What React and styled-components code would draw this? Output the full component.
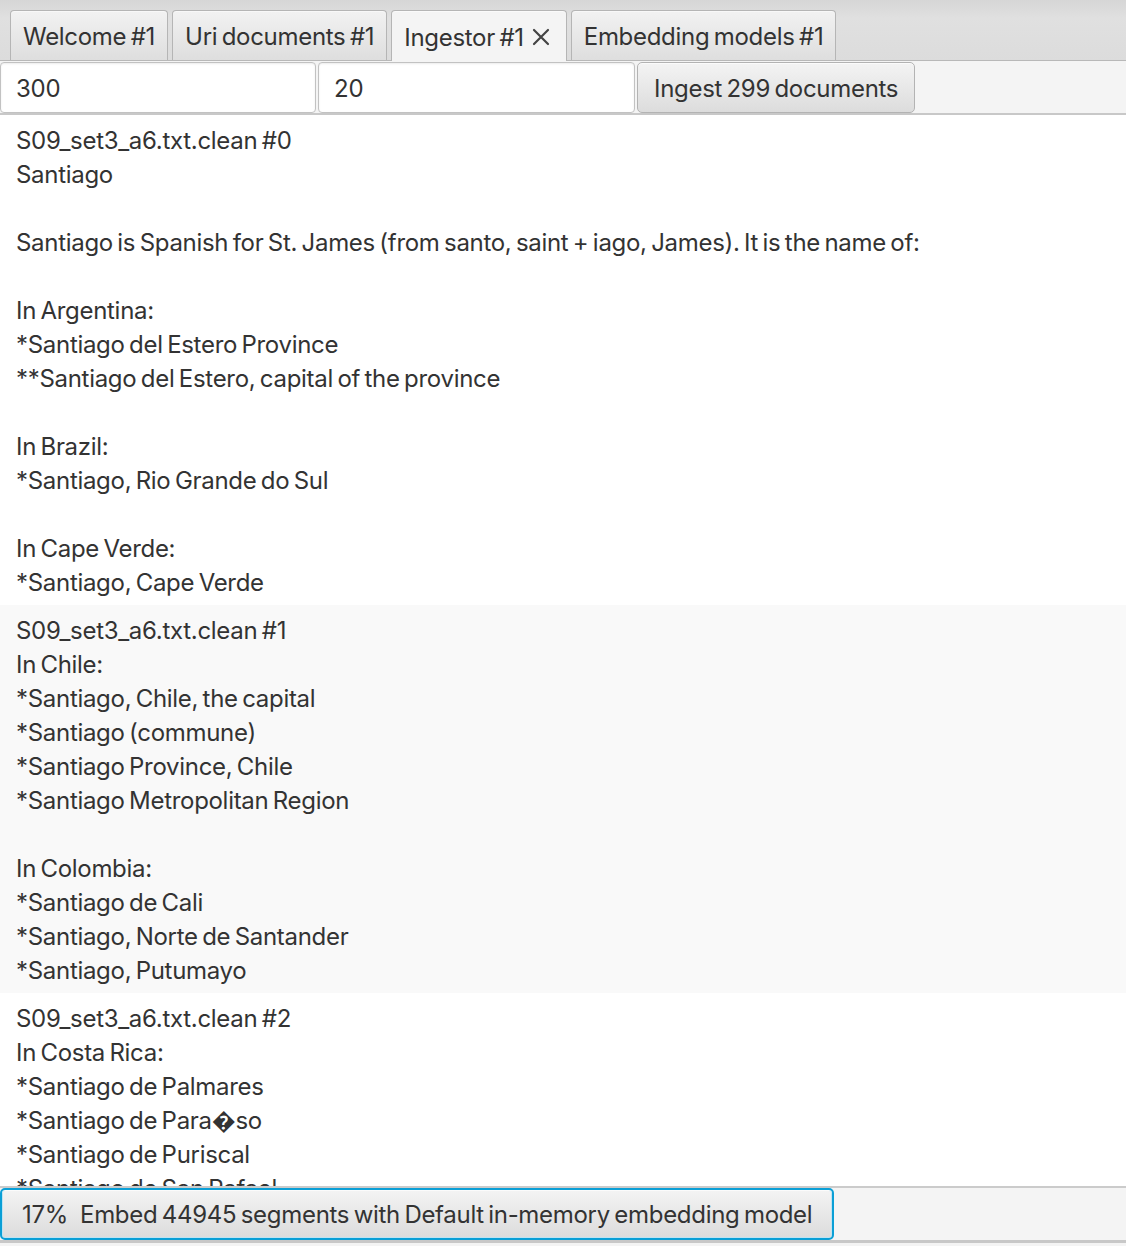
import React from 'react';
import styled, { createGlobalStyle } from 'styled-components';

const GlobalStyle = createGlobalStyle`
	html, body {
		margin: 0;
		padding: 0;
		background: #f4f4f4;
	}
	body {
		font-family: 'Inter', 'Noto Sans', 'DejaVu Sans', sans-serif;
		color: #333333;
		word-spacing: -2px;
	}
`;

const Window = styled.div`
	width: 1126px;
	height: 1246px;
	display: flex;
	flex-direction: column;
	overflow: hidden;
	background: #f4f4f4;
`;

const TabHeader = styled.div`
	height: 61px;
	display: flex;
	align-items: flex-end;
	gap: 4px;
	padding-left: 10px;
	background: linear-gradient(#d6d6d6, #e0e0e0 30%, #dcdcdc);
	border-bottom: 1px solid #b8b8b8;
	box-sizing: border-box;
	flex-shrink: 0;
`;

const Tab = styled.div`
	box-sizing: border-box;
	display: flex;
	align-items: center;
	gap: 8px;
	padding: 0 ${p => (p.selected ? '16px 0 12px' : '12px')};
	padding-top: 2px;
	font-size: 24px;
	letter-spacing: -0.3px;
	color: #333;
	border: 1px solid #b5b5b5;
	border-bottom: none;
	border-radius: 4px 4px 0 0;
	background: ${p => (p.selected ? '#f4f4f4' : 'linear-gradient(#f2f2f2, #dedede)')};
	box-shadow: inset 0 1px 0 ${p => (p.selected ? '#fafafa' : '#f8f8f8')};
	margin-bottom: ${p => (p.selected ? '-1px' : '0')};
	height: ${p => (p.selected ? '51px' : '50px')};
`;

const CloseIcon = () => (
	<svg width="18" height="18" viewBox="0 0 18 18">
		<path d="M2 2 L16 16 M16 2 L2 16" stroke="#444" strokeWidth="2.2" strokeLinecap="round" />
	</svg>
);

const Toolbar = styled.div`
	height: 54px;
	box-sizing: border-box;
	display: flex;
	align-items: center;
	gap: 2px;
	padding: 1px 0;
	background: #f4f4f4;
	border-bottom: 2px solid #c8c8c8;
	flex-shrink: 0;
`;

const Field = styled.div`
	width: ${p => p.width}px;
	height: 51px;
	box-sizing: border-box;
	display: flex;
	align-items: center;
	padding-left: 15px;
	padding-top: 2px;
	font-size: 24px;
	letter-spacing: -0.2px;
	color: #333;
	background: #ffffff;
	border: 1px solid #c2c2c2;
	border-radius: 4px;
	box-shadow: inset 0 1px 2px rgba(0, 0, 0, 0.08);
`;

const Button = styled.div`
	height: ${p => p.height || 51}px;
	box-sizing: border-box;
	display: flex;
	align-items: center;
	padding: ${p => (p.focused ? '0' : '2px')} ${p => p.pad || 16}px 0;
	font-size: 24px;
	letter-spacing: -0.3px;
	color: #333;
	background: linear-gradient(#f4f4f4, #dcdcdc);
	border: ${p => (p.focused ? '2px solid #0a9fd6' : '1px solid #b3b3b3')};
	border-radius: 5px;
	box-shadow: inset 0 1px 0 #fbfbfb${p => (p.focused ? ', inset 0 0 0 1px #bfe3f2' : '')};
	white-space: nowrap;
`;

const Percent = styled.span`
	margin-right: 12px;
`;

const List = styled.div`
	flex: 1;
	overflow: hidden;
	background: #ffffff;
`;

const Cell = styled.div`
	padding: 9px 16px 5px;
	background: ${p => (p.odd ? '#f9f9f9' : '#ffffff')};
	font-size: 24px;
	line-height: 34px;
	letter-spacing: -0.3px;
	color: #333;
	white-space: pre;
`;

const BottomBar = styled.div`
	height: 60px;
	box-sizing: border-box;
	display: flex;
	align-items: flex-start;
	background: #f4f4f4;
	border-top: 2px solid #cbcbcb;
	flex-shrink: 0;
	position: relative;
`;

const BottomRule = styled.div`
	position: absolute;
	left: 0;
	right: 0;
	bottom: 3px;
	height: 3px;
	background: #c8c8c8;
`;

const cells = [
	[
		'S09_set3_a6.txt.clean #0',
		'Santiago',
		'',
		'Santiago is Spanish for St. James (from santo, saint + iago, James). It is the name of:',
		'',
		'In Argentina:',
		'*Santiago del Estero Province',
		'**Santiago del Estero, capital of the province',
		'',
		'In Brazil:',
		'*Santiago, Rio Grande do Sul',
		'',
		'In Cape Verde:',
		'*Santiago, Cape Verde',
	],
	[
		'S09_set3_a6.txt.clean #1',
		'In Chile:',
		'*Santiago, Chile, the capital',
		'*Santiago (commune)',
		'*Santiago Province, Chile',
		'*Santiago Metropolitan Region',
		'',
		'In Colombia:',
		'*Santiago de Cali',
		'*Santiago, Norte de Santander',
		'*Santiago, Putumayo',
	],
	[
		'S09_set3_a6.txt.clean #2',
		'In Costa Rica:',
		'*Santiago de Palmares',
		'*Santiago de Para\uFFFDso',
		'*Santiago de Puriscal',
		'*Santiago de San Rafael',
		'*Santiago de San Ram\uFFFDn',
	],
];

const App = () => (
	<Window>
		<GlobalStyle />
		<TabHeader>
			<Tab>Welcome #1</Tab>
			<Tab>Uri documents #1</Tab>
			<Tab selected>
				Ingestor #1
				<CloseIcon />
			</Tab>
			<Tab>Embedding models #1</Tab>
		</TabHeader>
		<Toolbar>
			<Field width={316}>300</Field>
			<Field width={317}>20</Field>
			<Button>Ingest 299 documents</Button>
		</Toolbar>
		<List>
			{cells.map((lines, i) => (
				<Cell key={i} odd={i % 2 === 1}>
					{lines.join('\n')}
				</Cell>
			))}
		</List>
		<BottomBar>
			<Button focused height={52} pad={20}>
				<Percent>17%</Percent>
				Embed 44945 segments with Default in-memory embedding model
			</Button>
			<BottomRule />
		</BottomBar>
	</Window>
);

export default App;
